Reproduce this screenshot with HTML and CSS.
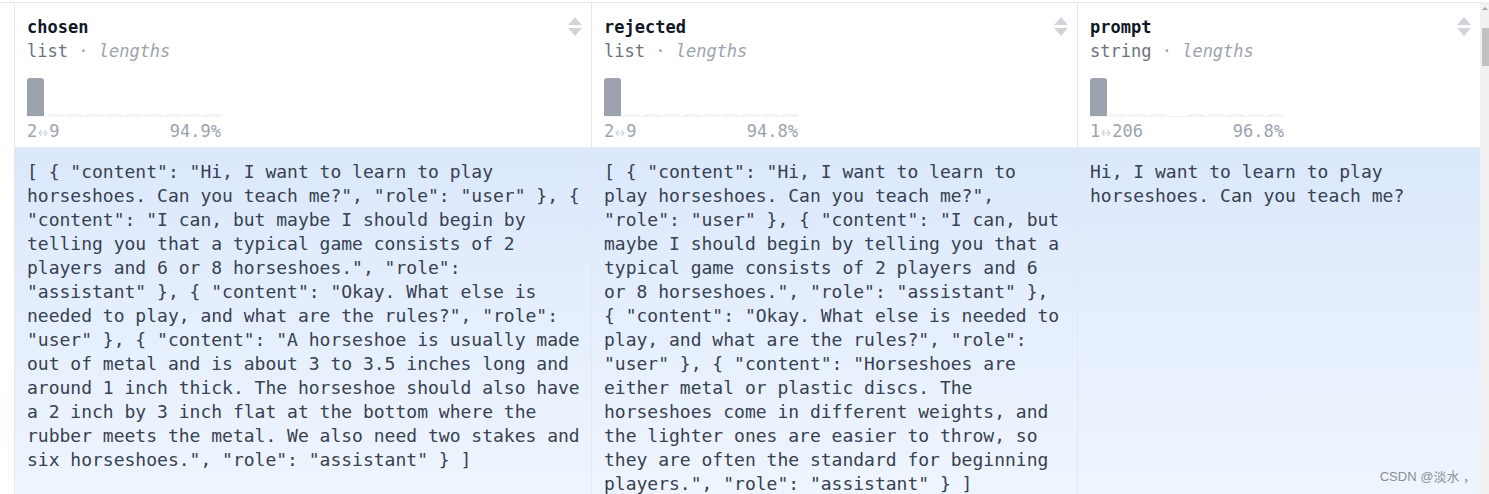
FILE: index.html
```html
<!DOCTYPE html>
<html>
<head>
<meta charset="utf-8">
<link rel="stylesheet" href="styles.css">
</head>
<body>
<div class="page">
  <div class="viewer">
    <div class="table">
      <div class="head-row">
        <div class="hcell c1">
          <div class="sort"><svg width="14" height="20" viewBox="0 0 14 20"><path d="M7 0 L14 8 L0 8 Z" fill="#d1d5db"/><path d="M0 11 L14 11 L7 19 Z" fill="#d1d5db"/></svg></div>
          <div class="name">chosen</div>
          <div class="type">list <span class="dot">·</span> <span class="len">lengths</span></div>
          <div class="hist">
            <span class="bar full"></span><span class="bar"></span><span class="bar"></span><span class="bar"></span><span class="bar"></span><span class="bar"></span><span class="bar"></span><span class="bar"></span><span class="bar"></span><span class="bar"></span>
          </div>
          <div class="stats"><span>2<svg class="arr" width="10" height="8" viewBox="0 0 10 8"><path d="M3.5 1 L1 4 L3.5 7 M6.5 1 L9 4 L6.5 7 M1 4 H9" stroke="#d1d5db" stroke-width="1.2" fill="none"/></svg>9</span><span>94.9%</span></div>
        </div>
        <div class="hcell c2">
          <div class="sort"><svg width="14" height="20" viewBox="0 0 14 20"><path d="M7 0 L14 8 L0 8 Z" fill="#d1d5db"/><path d="M0 11 L14 11 L7 19 Z" fill="#d1d5db"/></svg></div>
          <div class="name">rejected</div>
          <div class="type">list <span class="dot">·</span> <span class="len">lengths</span></div>
          <div class="hist">
            <span class="bar full"></span><span class="bar"></span><span class="bar"></span><span class="bar"></span><span class="bar"></span><span class="bar"></span><span class="bar"></span><span class="bar"></span><span class="bar"></span><span class="bar"></span>
          </div>
          <div class="stats"><span>2<svg class="arr" width="10" height="8" viewBox="0 0 10 8"><path d="M3.5 1 L1 4 L3.5 7 M6.5 1 L9 4 L6.5 7 M1 4 H9" stroke="#d1d5db" stroke-width="1.2" fill="none"/></svg>9</span><span>94.8%</span></div>
        </div>
        <div class="hcell c3">
          <div class="sort"><svg width="14" height="20" viewBox="0 0 14 20"><path d="M7 0 L14 8 L0 8 Z" fill="#d1d5db"/><path d="M0 11 L14 11 L7 19 Z" fill="#d1d5db"/></svg></div>
          <div class="name">prompt</div>
          <div class="type">string <span class="dot">·</span> <span class="len">lengths</span></div>
          <div class="hist">
            <span class="bar full"></span><span class="bar"></span><span class="bar"></span><span class="bar"></span><span class="bar none"></span><span class="bar"></span><span class="bar"></span><span class="bar"></span><span class="bar"></span><span class="bar"></span>
          </div>
          <div class="stats"><span>1<svg class="arr" width="10" height="8" viewBox="0 0 10 8"><path d="M3.5 1 L1 4 L3.5 7 M6.5 1 L9 4 L6.5 7 M1 4 H9" stroke="#d1d5db" stroke-width="1.2" fill="none"/></svg>206</span><span>96.8%</span></div>
        </div>
      </div>
      <div class="body-row">
        <div class="bcell c1">[ { "content": "Hi, I want to learn to play horseshoes. Can you teach me?", "role": "user" }, { "content": "I can, but maybe I should begin by telling you that a typical game consists of 2 players and 6 or 8 horseshoes.", "role": "assistant" }, { "content": "Okay. What else is needed to play, and what are the rules?", "role": "user" }, { "content": "A horseshoe is usually made out of metal and is about 3 to 3.5 inches long and around 1 inch thick. The horseshoe should also have a 2 inch by 3 inch flat at the bottom where the rubber meets the metal. We also need two stakes and six horseshoes.", "role": "assistant" } ]</div>
        <div class="bcell c2">[ { "content": "Hi, I want to learn to play horseshoes. Can you teach me?", "role": "user" }, { "content": "I can, but maybe I should begin by telling you that a typical game consists of 2 players and 6 or 8 horseshoes.", "role": "assistant" }, { "content": "Okay. What else is needed to play, and what are the rules?", "role": "user" }, { "content": "Horseshoes are either metal or plastic discs. The horseshoes come in different weights, and the lighter ones are easier to throw, so they are often the standard for beginning players.", "role": "assistant" } ]</div>
        <div class="bcell c3">Hi, I want to learn to play horseshoes. Can you teach me?</div>
      </div>
    </div>
    <div class="scrollbar">
      <div class="sb-arrow"></div>
      <div class="sb-thumb"></div>
    </div>
  </div>
  <div class="watermark">CSDN @淡水 ，</div>
</div>
</body>
</html>
```
FILE: styles.css
```css
html, body {
  margin: 0;
  padding: 0;
  background: #ffffff;
  overflow: hidden;
}
.page {
  position: relative;
  width: 1489px;
  height: 494px;
  overflow: hidden;
  padding-top: 2px;
  box-sizing: border-box;
}
.viewer {
  display: flex;
  border-top: 1px solid #e5e7eb;
  height: 491px;
}
.table {
  margin-left: 14px;
  width: 1466px;
  display: flex;
  flex-direction: column;
  font-family: "DejaVu Sans Mono", "Liberation Mono", monospace;
}
.head-row, .body-row {
  display: grid;
  grid-template-columns: 577px 486px 403px;
}
.head-row {
  flex-shrink: 0;
  height: 145px;
  border-bottom: 1px solid #e8eef8;
  box-sizing: border-box;
}
.hcell {
  position: relative;
  border-left: 1px solid #e5e7eb;
  padding: 12px 0 0 12px;
  font-size: 17px;
  line-height: 24px;
}
.name {
  font-weight: bold;
  color: #111827;
}
.type {
  color: #6b7280;
}
.type .dot {
  color: #9ca3af;
}
.type .len {
  color: #9ca3af;
  font-style: italic;
}
.sort {
  position: absolute;
  top: 14px;
  right: 9px;
  line-height: 0;
}
.hist {
  margin-top: 15px;
  width: 194px;
  height: 38px;
  display: flex;
  align-items: flex-end;
  gap: 3px;
  border-bottom: 1px solid #f1f3f6;
}
.bar {
  flex: 1;
  height: 2px;
  background: #f3f4f6;
}
.bar.none {
  background: transparent;
}
.bar.full {
  height: 38px;
  background: #9ca3af;
  border-radius: 3px 3px 0 0;
}
.stats {
  width: 194px;
  margin-top: 2px;
  display: flex;
  justify-content: space-between;
  color: #9ca3af;
  font-size: 17px;
  line-height: 24px;
}
.arr {
  margin: 0 1px;
  vertical-align: 0;
}
.body-row {
  flex: 1;
  min-height: 0;
  background: linear-gradient(#dbe8fc, #eff5fe);
}
.bcell {
  border-left: 1px solid #e5e7eb;
  padding: 12px 5px 0 12px;
  font-size: 18px;
  line-height: 24px;
  color: #374151;
  overflow-wrap: break-word;
}
.bcell.c2 {
  padding-right: 13px;
}
.bcell.c3 {
  padding-right: 13px;
}
.scrollbar {
  width: 9px;
  background: #f1f1f1;
  margin-top: -1px;
  position: relative;
}
.sb-arrow {
  margin: 5px auto 0;
  width: 0;
  height: 0;
  border-left: 3px solid transparent;
  border-right: 3px solid transparent;
  border-bottom: 3px solid #a3a3a3;
}
.sb-thumb {
  margin: 18px 0 0 2px;
  width: 7px;
  height: 38px;
  background: #c1c1c1;
}
.watermark {
  position: absolute;
  right: 13px;
  bottom: 9px;
  font-family: "Liberation Sans", "Noto Sans CJK SC", sans-serif;
  font-size: 13px;
  color: #8a8f98;
}
```
